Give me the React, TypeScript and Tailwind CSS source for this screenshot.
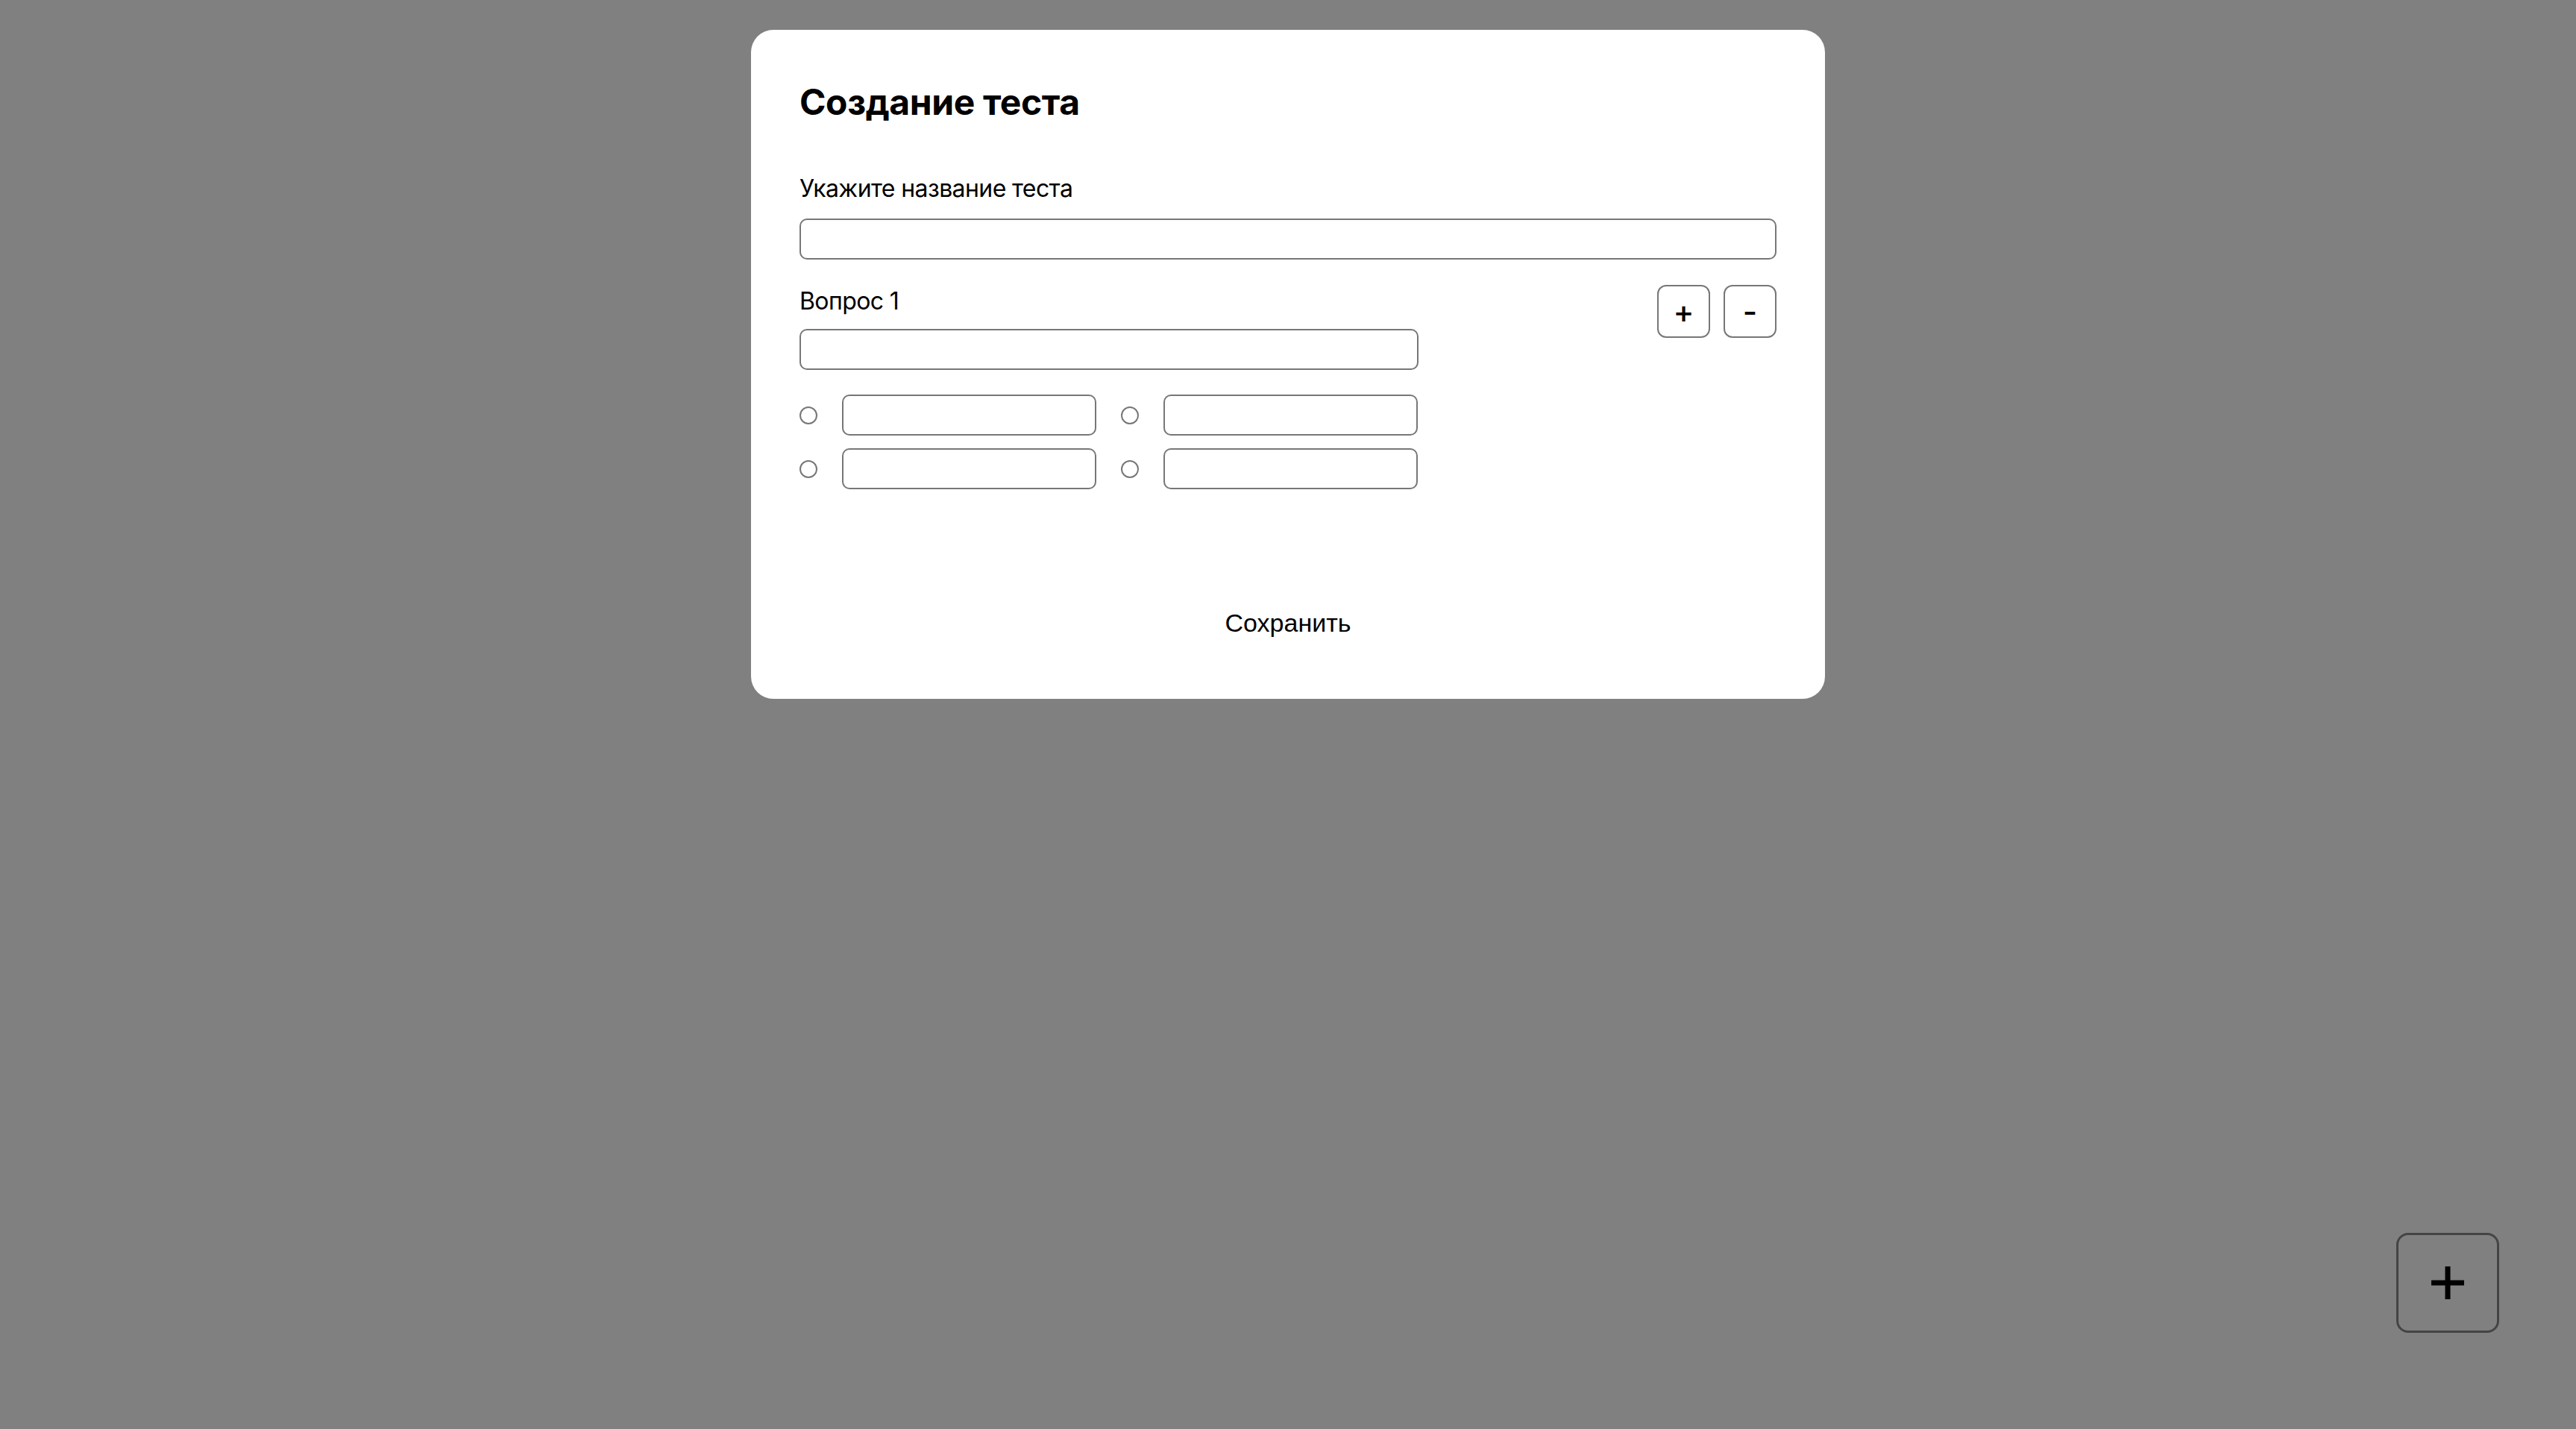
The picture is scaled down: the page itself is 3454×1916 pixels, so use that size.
import React from "react";

const inputCls =
  "block h-[55px] border-2 border-[#777] rounded-[10px] bg-white outline-none";

const Answer: React.FC = () => (
  <div className="flex items-center gap-[33px]">
    <input
      type="radio"
      name="answer"
      className="appearance-none w-[24px] h-[24px] rounded-full border-2 border-[#777] bg-white shrink-0"
    />
    <input type="text" className={`${inputCls} w-[341px]`} />
  </div>
);

const App: React.FC = () => {
  return (
    <div
      className="w-full min-h-screen bg-[#808080] pt-[40px]"
      style={{ fontFamily: "Inter, 'Noto Sans', sans-serif" }}
    >
      <div className="w-[1440px] mx-auto bg-white rounded-[30px] px-[65px] pt-[73px] pb-[85px] text-black">
        <h1 className="text-[48px] font-bold leading-none tracking-[-0.4px]">
          Создание теста
        </h1>

        <label className="block mt-[76px] text-[32px] leading-none tracking-[-0.6px]">
          Укажите название теста
        </label>
        <input type="text" className={`${inputCls} w-full mt-[24px]`} />

        <div className="flex justify-between items-start mt-[34px]">
          <div className="w-[830px]">
            <div className="pt-[6px] text-[32px] leading-none tracking-[-0.6px]">
              Вопрос 1
            </div>
            <input type="text" className={`${inputCls} w-full mt-[21px]`} />
            <div className="grid grid-cols-2 gap-x-[32px] gap-y-[17px] mt-[33px]">
              <Answer />
              <Answer />
              <Answer />
              <Answer />
            </div>
          </div>
          <div className="flex gap-[18px]">
            <button className="w-[71px] h-[71px] border-2 border-[#777] rounded-[12px] flex items-center justify-center text-[42px] font-medium leading-none">
              +
            </button>
            <button className="w-[71px] h-[71px] border-2 border-[#777] rounded-[12px] flex items-center justify-center text-[42px] font-medium leading-none">
              -
            </button>
          </div>
        </div>

        <div className="flex justify-center mt-[162px]">
          <button
            className="text-[34px] leading-none"
            style={{ fontFamily: "'Liberation Sans', Arial, sans-serif" }}
          >
            Сохранить
          </button>
        </div>
      </div>

      <button className="fixed right-[103px] bottom-[129px] w-[138px] h-[134px] border-[3px] border-[#444] rounded-[16px] flex items-center justify-center">
        <svg width="44" height="44" viewBox="0 0 44 44">
          <rect x="0" y="18.5" width="44" height="7" fill="#000" />
          <rect x="18.5" y="0" width="7" height="44" fill="#000" />
        </svg>
      </button>
    </div>
  );
};

export default App;
